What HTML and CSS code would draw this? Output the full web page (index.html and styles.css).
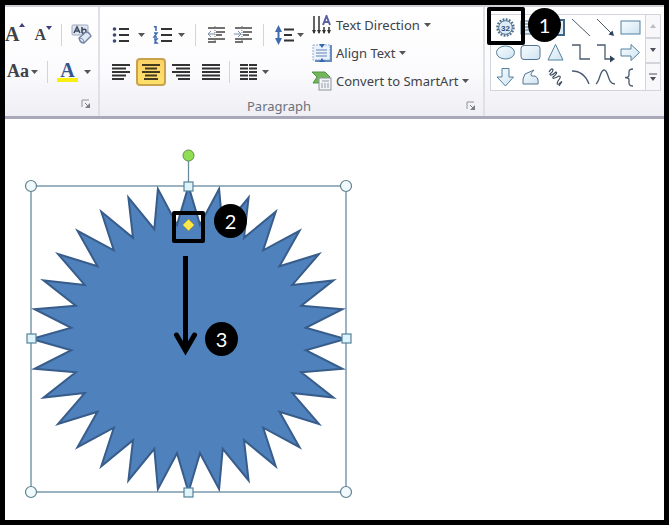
FILE: index.html
```html
<!DOCTYPE html>
<html lang="en">
<head>
<meta charset="utf-8">
<title>Adjusting a 32-point star</title>
<link rel="stylesheet" href="styles.css">
</head>
<body>
<svg class="defs" aria-hidden="true">
  <defs>
    <linearGradient id="pale" x1="0" y1="0" x2="1" y2="1"><stop offset="0" stop-color="#f8fcfe"/><stop offset="1" stop-color="#cfe4f2"/></linearGradient>
    <symbol id="launch" viewBox="0 0 10 10"><path d="M1 8V1H8" fill="none" stroke="#8f929c"/><path d="M4 4L7 7" stroke="#7b7e88"/><path d="M9 4V9H4Z" fill="#7b7e88"/></symbol>
  </defs>
</svg>
<header class="ribbon">
  <section class="group font-group" aria-label="Font">
    <div class="rows">
      <div class="row">
        <button class="tool grow" aria-label="Grow font">A<svg width="6" height="4"><path d="M0 4L3 0L6 4Z" fill="#3f3f80"/></svg></button>
        <button class="tool shrink" aria-label="Shrink font">A<svg width="6" height="4"><path d="M0 0H6L3 4Z" fill="#3f3f80"/></svg></button>
        <i class="sep"></i>
        <button class="tool" aria-label="Clear formatting"><svg width="21" height="21"><rect x="1" y="1" width="16" height="10" rx="1" fill="#dfe5ee" stroke="#9caabd"/><path d="M3 9L6 3L9 9M4 7H8M11 3V9M11 6Q15 4 15 7Q15 10 11 9" fill="none" stroke="#3c4b63" stroke-width="1.6"/><path d="M8 14L15 8Q18 8 20 12L13 19Q9 19 8 14Z" fill="#dfe7f3" stroke="#7185a6" stroke-width="1.3"/><path d="M8 14Q13 14 13 19" fill="none" stroke="#7185a6"/></svg></button>
      </div>
      <div class="row">
        <button class="tool case" aria-label="Change case">Aa<svg width="7" height="4"><path d="M0 0H7L3.500 4Z" fill="#555"/></svg></button>
        <i class="sep"></i>
        <button class="tool color" aria-label="Font color"><span class="swatch">A</span><svg width="7" height="4"><path d="M0 0H7L3.500 4Z" fill="#555"/></svg></button>
      </div>
    </div>
    <footer class="group-foot"><button class="launcher" aria-label="Font settings"><svg width="10" height="10"><use href="#launch"/></svg></button></footer>
  </section>

  <section class="group para-group" aria-label="Paragraph">
    <div class="para-body">
      <div class="rows">
        <div class="row lists">
          <button class="tool" aria-label="Bullets"><svg width="33" height="18"><g fill="#3d4770"><circle cx="2.500" cy="3" r="1.800"/><circle cx="2.500" cy="9" r="1.800"/><circle cx="2.500" cy="15" r="1.800"/></g><path d="M7 3H17M7 9H17M7 15H17" stroke="#333" stroke-width="1.800"/><path d="M26 7H33L29.500 11Z" fill="#555"/></svg></button>
          <button class="tool" aria-label="Numbering"><svg width="33" height="18"><path d="M2 1L4 0V5M2 7H5L2 11H5M2 13H5L3 15L5 17H2" fill="none" stroke="#4168ad" stroke-width="1.500"/><path d="M9 3H20M9 9H20M9 15H20" stroke="#333" stroke-width="1.800"/><path d="M26 7H33L29.500 11Z" fill="#555"/></svg></button>
          <i class="sep"></i>
          <button class="tool" aria-label="Decrease indent"><svg width="20" height="18"><path d="M2 2H19M10 6H19M10 9H16M2 13H19M2 16H10" stroke="#444" stroke-width="1.600"/><path d="M9 8H2M5 5L2 8L5 11" fill="none" stroke="#758bab"/><path d="M9 0V18" stroke="#777" stroke-dasharray="1 1"/></svg></button>
          <button class="tool" aria-label="Increase indent"><svg width="20" height="18"><path d="M2 2H19M10 6H19M10 9H16M2 13H19M2 16H10" stroke="#444" stroke-width="1.600"/><path d="M1 8H8M5 5L8 8L5 11" fill="none" stroke="#758bab"/><path d="M9 0V18" stroke="#777" stroke-dasharray="1 1"/></svg></button>
          <i class="sep"></i>
          <button class="tool" aria-label="Line spacing"><svg width="30" height="22"><path d="M4.500 1L8 8H5.500V14H8L4.500 21L1 14H3.500V8H1Z" fill="#3f6cad"/><path d="M10 5.500H20M10 11H18M10 16.500H20" stroke="#333" stroke-width="2"/><path d="M23 9H30L26.500 13Z" fill="#555"/></svg></button>
        </div>
        <div class="row aligns">
          <button class="tool" aria-label="Align left"><svg width="18" height="16"><path d="M0 1H18M0 4.500H14M0 8H18M0 11.500H14M0 15H12" stroke="#333" stroke-width="2"/></svg></button>
          <button class="tool active" aria-label="Center" aria-pressed="true"><svg width="18" height="16"><path d="M0 1H18M3 4.500H15M0 8H18M3 11.500H15M2 15H16" stroke="#443a20" stroke-width="2"/></svg></button>
          <button class="tool" aria-label="Align right"><svg width="18" height="16"><path d="M0 1H18M4 4.500H18M0 8H18M4 11.500H18M6 15H18" stroke="#333" stroke-width="2"/></svg></button>
          <button class="tool" aria-label="Justify"><svg width="18" height="16"><path d="M0 1H18M0 4.500H18M0 8H18M0 11.500H18M0 15H18" stroke="#333" stroke-width="2"/></svg></button>
          <i class="sep"></i>
          <button class="tool columns" aria-label="Columns"><svg width="29" height="16"><path d="M0 1H17M0 4.500H17M0 8H17M0 11.500H17M0 15H17" stroke="#333" stroke-width="2" stroke-dasharray="8 1"/><path d="M22 6H29L25.500 10Z" fill="#555"/></svg></button>
        </div>
      </div>
      <div class="commands">
        <button class="command"><svg width="20" height="20"><path d="M2 1V18M7 1V18M12 12V18M17 12V18" stroke="#333" stroke-width="1.500"/><path d="M0 15H4L2 19ZM5 15H9L7 19ZM10 15H14L12 19ZM15 15H19L17 19Z" fill="#333"/><path d="M11 10L14.500 1L18 10M12 7H17" fill="none" stroke="#5961a5" stroke-width="2"/></svg><span>Text Direction</span><svg width="7" height="4"><path d="M0 0H7L3.500 4Z" fill="#555"/></svg></button>
        <button class="command"><svg width="20" height="20"><rect x="1" y="2" width="17" height="15" fill="#eaf2fb" stroke="#91acd0" stroke-dasharray="2 1"/><path d="M19 2V18H3" fill="none" stroke="#668cc2" stroke-width="2"/><path d="M4 7H15M4 10H15M4 13H15" stroke="#6084b7"/><path d="M7 1H13L10 5ZM7 19H13L10 15Z" fill="#3469ae"/></svg><span>Align Text</span><svg width="7" height="4"><path d="M0 0H7L3.500 4Z" fill="#555"/></svg></button>
        <button class="command"><svg width="20" height="20"><path d="M0 1H13L18 6L13 12H1L5 6Z" fill="#72b658" stroke="#4e9645"/><rect x="7" y="7" width="12" height="12" fill="#f2f4f7" stroke="#8c949e"/><path d="M10 10H17M10 12V17M13 12V17M16 12V17" stroke="#9099a3"/></svg><span>Convert to SmartArt</span><svg width="7" height="4"><path d="M0 0H7L3.500 4Z" fill="#555"/></svg></button>
      </div>
    </div>
    <footer class="group-foot"><span class="group-name">Paragraph</span><button class="launcher" aria-label="Paragraph settings"><svg width="10" height="10"><use href="#launch"/></svg></button></footer>
  </section>

  <section class="group draw-group" aria-label="Drawing">
    <div class="gallery">
      <div class="shapes">
        <button class="shape" aria-label="32-point star"><svg width="21" height="21"><circle cx="10.500" cy="10.500" r="8" fill="none" stroke="#51718f" stroke-width="2.500" stroke-dasharray="1.800 1.340"/><circle cx="10.500" cy="10.500" r="6.800" fill="#dcebf6" stroke="#51718f"/><text class="tiny" x="10.500" y="13.500">32</text></svg></button>
        <button class="shape" aria-label="Text box"><svg width="21" height="21"><rect x="1" y="4" width="19" height="13" fill="url(#pale)" stroke="#53728f"/><path d="M4 7H11M4 10H15M4 13H15" stroke="#53728f"/></svg></button>
        <button class="shape" aria-label="Vertical text box"><svg width="21" height="21"><rect x="2" y="3" width="17" height="15" fill="url(#pale)" stroke="#416582" stroke-width="2"/></svg></button>
        <button class="shape" aria-label="Line"><svg width="21" height="21"><path d="M2 2L20 19" stroke="#4a5b6e"/></svg></button>
        <button class="shape" aria-label="Arrow"><svg width="21" height="21"><path d="M2 2L17 17" stroke="#4a5b6e"/><path d="M19 19L13.500 17.500L17.500 13.500Z" fill="#2e4360"/></svg></button>
        <button class="shape" aria-label="Rectangle"><svg width="21" height="21"><rect x="1" y="4" width="19" height="13" fill="url(#pale)" stroke="#53809f"/></svg></button>
        <button class="shape" aria-label="Oval"><svg width="21" height="21"><ellipse cx="10.500" cy="10.500" rx="9" ry="6.500" fill="url(#pale)" stroke="#53809f"/></svg></button>
        <button class="shape" aria-label="Rounded rectangle"><svg width="21" height="21"><rect x="1" y="3.500" width="19" height="14" rx="3" fill="url(#pale)" stroke="#53728f"/></svg></button>
        <button class="shape" aria-label="Triangle"><svg width="21" height="21"><path d="M10.500 2.500L18 18H3Z" fill="url(#pale)" stroke="#53809f"/></svg></button>
        <button class="shape" aria-label="Elbow connector"><svg width="21" height="21"><path d="M2 3H10V17H20" fill="none" stroke="#4a5b6e" stroke-width="1.300"/></svg></button>
        <button class="shape" aria-label="Elbow arrow connector"><svg width="21" height="21"><path d="M2 3H10V17H16" fill="none" stroke="#4a5b6e" stroke-width="1.300"/><path d="M15 13.500L20 17L15 20.500Z" fill="#2e4360"/></svg></button>
        <button class="shape" aria-label="Right arrow"><svg width="21" height="21"><path d="M1 7H11V2.500L19.500 10.500L11 18.500V14H1Z" fill="url(#pale)" stroke="#53809f"/></svg></button>
        <button class="shape" aria-label="Down arrow"><svg width="21" height="21"><path d="M7 1.500H14V10H18.500L10.500 19L2 10H7Z" fill="url(#pale)" stroke="#53809f"/></svg></button>
        <button class="shape" aria-label="Freeform"><svg width="21" height="21"><path d="M5 7L14 3Q9 8 12 9H15Q19 11 18 17H3V12Z" fill="url(#pale)" stroke="#53728f"/></svg></button>
        <button class="shape" aria-label="Scribble"><svg width="21" height="21"><path d="M4 5Q7 0 8 3Q8 5 5 7Q5 10 11 5Q13 6 8 10Q7 13 14 9Q17 9 13 14Q11 18 14 17Q18 13 16 16L14 19" fill="none" stroke="#3e4c61" stroke-width="1.200"/></svg></button>
        <button class="shape" aria-label="Arc"><svg width="21" height="21"><path d="M2 4Q14 4 19 17" fill="none" stroke="#4a5b6e" stroke-width="1.300"/></svg></button>
        <button class="shape" aria-label="Curve"><svg width="21" height="21"><path d="M1 17C5 14 5 3 9 3C14 3 12 17 20 17" fill="none" stroke="#4a5b6e" stroke-width="1.300"/></svg></button>
        <button class="shape" aria-label="Left brace"><svg width="21" height="21"><path d="M13 2Q9 2 9 5V8Q9 10.500 5 10.500Q9 10.500 9 13V16Q9 19 13 19" fill="none" stroke="#4a5b6e" stroke-width="1.300"/></svg></button>
      </div>
      <div class="scroller">
        <button aria-label="Scroll up" disabled><svg width="6" height="4"><path d="M0 4L3 0L6 4Z" fill="#bbbdc2"/></svg></button>
        <button aria-label="Scroll down"><svg width="6" height="4"><path d="M0 0H6L3 4Z" fill="#4c5058"/></svg></button>
        <button aria-label="More shapes"><svg width="8" height="8"><path d="M0 1H8" stroke="#4c5058"/><path d="M1 4H7L4 8Z" fill="#4c5058"/></svg></button>
      </div>
      <span class="frame frame-star"></span>
      <span class="badge badge-1">1</span>
    </div>
  </section>
</header>

<main class="slide">
  <div class="drawing">
    <svg width="340" height="365" role="img" aria-label="Selected 32-point star">
      <polygon id="star" fill="#4f81bd" stroke="#385d8a" stroke-width="2" stroke-miterlimit="10"/>
      <g fill="none" stroke="#668b9e" stroke-width="1.300"><rect x="11" y="46" width="315" height="306"/><path d="M168.500 20V46"/></g>
      <circle cx="168.500" cy="15.500" r="5.500" fill="#92de53" stroke="#5c8a4a"/>
      <g fill="#f0f9fc" stroke="#608090" stroke-width="1.200">
        <circle cx="11" cy="46" r="5.500"/><circle cx="326" cy="46" r="5.500"/><circle cx="11" cy="352" r="5.500"/><circle cx="326" cy="352" r="5.500"/>
      </g>
      <g fill="#def3fa" stroke="#55829a" stroke-width="1.200">
        <rect x="164" y="42" width="9" height="9"/><rect x="7" y="194" width="9" height="9"/><rect x="322" y="194" width="9" height="9"/><rect x="164" y="348" width="9" height="9"/>
      </g>
      <path d="M168.500 79.500L174 85L168.500 90.500L163 85Z" fill="#ffe94a" stroke="#d9b92f"/>
      <path d="M165.500 116V210" stroke="#000" stroke-width="5"/>
      <path d="M156.500 195L165.500 210.500L174.500 195" fill="none" stroke="#000" stroke-width="5" stroke-linecap="round"/>
    </svg>
    <span class="frame frame-handle"></span>
    <span class="badge badge-2">2</span>
    <span class="badge badge-3">3</span>
  </div>
</main>
<script src="star.js"></script>
</body>
</html>
```
FILE: styles.css
```css
* {
  box-sizing: border-box;
}

body {
  margin: 0;
  min-height: 100vh;
  display: flex;
  flex-direction: column;
  border: 5px solid #000;
  background: #fff;
  font-family: "Noto Sans", "Open Sans", sans-serif;
  font-size: 13px;
  color: #3f4247;
  overflow-x: hidden;
}

svg {
  display: block;
  flex: none;
}

.defs {
  position: absolute;
  width: 0;
  height: 0;
}

button {
  display: flex;
  align-items: center;
  padding: 0;
  border: 0;
  background: none;
  color: inherit;
  font: inherit;
}

.ribbon {
  display: flex;
  height: 114px;
  border-top: 2px solid #cfcfd6;
  border-bottom: 3px solid #a9a8b8;
  background: linear-gradient(#fff, #fbfbfd 60%, #eeeef4);
  overflow: hidden;
}

.group {
  display: flex;
  flex-direction: column;
  flex: none;
  border-right: 2px solid #e0e1e7;
}

.rows {
  flex: none;
  padding-top: 9px;
}

.row {
  display: flex;
  align-items: center;
  height: 37px;
}

.sep {
  width: 1px;
  height: 22px;
  margin: 0 3px;
  background: #d3d4da;
}

.group-foot {
  display: flex;
  align-items: center;
  margin-top: auto;
  height: 24px;
  padding-right: 7px;
}

.launcher {
  margin-left: auto;
}

.font-group {
  width: 95px;
}

.font-group .row {
  gap: 6px;
  font-family: "Liberation Serif", serif;
  font-weight: bold;
}

.grow {
  font-size: 20px;
}

.shrink {
  margin-left: 3px;
  font-size: 16px;
}

.font-group .grow svg,
.font-group .shrink svg {
  align-self: flex-start;
}

.case {
  gap: 2px;
  padding-left: 2px;
  font-size: 18px;
}

.color {
  gap: 6px;
}

.swatch {
  width: 21px;
  border-bottom: 4px solid #f9ee12;
  color: #35558f;
  font-size: 20px;
  line-height: 16px;
  text-align: center;
}

.para-group {
  width: 385px;
}

.para-body {
  display: flex;
  justify-content: space-between;
}

.lists {
  gap: 7px;
  padding-left: 12px;
}

.aligns {
  padding-left: 6px;
}

.aligns .tool {
  justify-content: center;
  width: 30px;
  height: 28px;
}

.aligns .columns {
  width: 42px;
}

.aligns .active {
  border: 2px solid #c9a24c;
  border-radius: 4px;
  background: linear-gradient(#fbd268, #ffe169);
}

.commands {
  width: 171px;
  padding-top: 4px;
}

.command {
  gap: 4px;
  height: 28px;
  white-space: nowrap;
}

.group-name {
  flex: 1;
  padding-right: 8px;
  text-align: center;
  color: #6d717c;
}

.draw-group {
  flex: 1;
  min-width: 0;
  border-right: 0;
  padding: 7px 0 0 5px;
}

.gallery {
  position: relative;
  display: flex;
  width: 171px;
}

.shapes {
  display: grid;
  grid-template-columns: repeat(6, 25px);
  grid-auto-rows: 25px;
  padding: 0 2px;
  border: 1px solid #d2d5dc;
  background: #fff;
}

.shape {
  justify-content: center;
}

.tiny {
  font-family: "Liberation Sans", sans-serif;
  font-size: 8px;
  font-weight: bold;
  fill: #2f5079;
  text-anchor: middle;
}

.scroller {
  display: grid;
  flex: 1;
}

.scroller button {
  justify-content: center;
  border: 1px solid #d2d5dc;
  border-left: 0;
  background: #f8f8fb;
}

.slide {
  flex: 1;
  padding: 21px 15px 0;
}

.drawing {
  position: relative;
  width: 340px;
}

.frame {
  position: absolute;
  border: 4px solid #000;
  border-radius: 2px;
}

.frame-star {
  left: -3px;
  top: -7px;
  width: 38px;
  height: 38px;
}

.frame-handle {
  left: 152px;
  top: 71px;
  width: 33px;
  height: 32px;
}

.badge {
  position: absolute;
  width: 33px;
  height: 34px;
  border-radius: 50%;
  background: #000;
  color: #fff;
  font-family: Lato, sans-serif;
  font-size: 20px;
  line-height: 34px;
  text-align: center;
}

.badge-1 {
  left: 38px;
  top: -6px;
}

.badge-2 {
  left: 194px;
  top: 64px;
}

.badge-3 {
  left: 185px;
  top: 182px;
}
```
FILE: star.js
```js
// 32-point star: outer and inner vertices alternate around an ellipse.
const center = { x: 168.5, y: 199 };
const radius = { x: 157, y: 153 };
const innerRatio = 0.75;
const vertices = [];
for (let i = 0; i < 64; i++) {
  const angle = (i * Math.PI) / 32;
  const scale = i % 2 ? innerRatio : 1;
  const x = center.x + radius.x * scale * Math.sin(angle);
  const y = center.y - radius.y * scale * Math.cos(angle);
  vertices.push(x.toFixed(1) + "," + y.toFixed(1));
}
document.getElementById("star").setAttribute("points", vertices.join(" "));
```
